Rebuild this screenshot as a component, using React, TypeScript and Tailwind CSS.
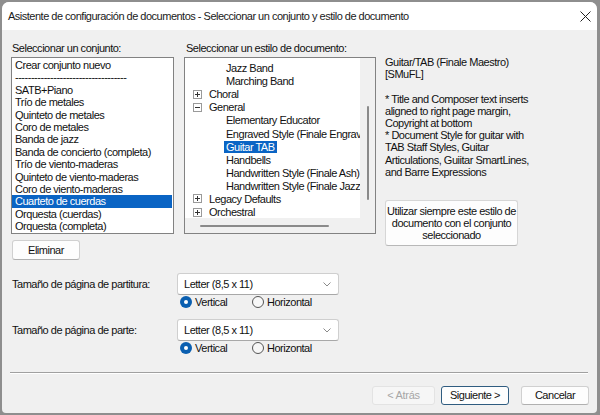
import React from "react";

const conjuntos = [
  "Crear conjunto nuevo",
  "-".repeat(35),
  "SATB+Piano",
  "Trío de metales",
  "Quinteto de metales",
  "Coro de metales",
  "Banda de jazz",
  "Banda de concierto (completa)",
  "Trío de viento-maderas",
  "Quinteto de viento-maderas",
  "Coro de viento-maderas",
  "Cuarteto de cuerdas",
  "Orquesta (cuerdas)",
  "Orquesta (completa)",
];

type Estilo = { label: string; child?: boolean; toggle?: "plus" | "minus"; selected?: boolean };

const estilos: Estilo[] = [
  { label: "Jazz Band", child: true },
  { label: "Marching Band", child: true },
  { label: "Choral", toggle: "plus" },
  { label: "General", toggle: "minus" },
  { label: "Elementary Educator", child: true },
  { label: "Engraved Style (Finale Engraved)", child: true },
  { label: "Guitar TAB", child: true, selected: true },
  { label: "Handbells", child: true },
  { label: "Handwritten Style (Finale Ash)", child: true },
  { label: "Handwritten Style (Finale Jazz)", child: true },
  { label: "Legacy Defaults", toggle: "plus" },
  { label: "Orchestral", toggle: "plus" },
];

function Toggle({ kind }: { kind: "plus" | "minus" }) {
  return (
    <svg width="9" height="9" viewBox="0 0 9 9" className="shrink-0">
      <rect x="0.5" y="0.5" width="8" height="8" fill="#fff" stroke="#9a9a9a" />
      <line x1="2" y1="4.5" x2="7" y2="4.5" stroke="#333" />
      {kind === "plus" && <line x1="4.5" y1="2" x2="4.5" y2="7" stroke="#333" />}
    </svg>
  );
}

function Radio({ checked, label }: { checked?: boolean; label: string }) {
  return (
    <div className="flex items-center">
      {checked ? (
        <span className="w-[12px] h-[12px] rounded-full bg-[#0a5fb0] flex items-center justify-center">
          <span className="w-[4px] h-[4px] rounded-full bg-white" />
        </span>
      ) : (
        <span className="w-[12px] h-[12px] rounded-full border border-[#555] bg-[#f7f7f7]" />
      )}
      <span className="ml-[3px]">{label}</span>
    </div>
  );
}

function Select({ value }: { value: string }) {
  return (
    <div className="w-[162px] h-[22px] bg-white border border-[#cfcfcf] border-b-[#a8a8a8] rounded-[3px] flex items-center justify-between pl-[6px] pr-[7px]">
      <span>{value}</span>
      <svg width="8" height="5" viewBox="0 0 8 5">
        <path d="M0.5 0.5 L4 4 L7.5 0.5" fill="none" stroke="#8a8a8a" strokeWidth="1" />
      </svg>
    </div>
  );
}

function PageSize({ label }: { label: string }) {
  return (
    <div className="flex">
      <div className="w-[165px] h-[22px] flex items-center">{label}</div>
      <div className="flex flex-col">
        <Select value="Letter (8,5 x 11)" />
        <div className="flex items-center h-[12px] mt-[1px] pl-[3px]">
          <div className="w-[72px]">
            <Radio checked label="Vertical" />
          </div>
          <Radio label="Horizontal" />
        </div>
      </div>
    </div>
  );
}

export default function App() {
  return (
    <div className="w-[600px] h-[415px] bg-[#8e8e8e] pt-[2px] pl-[2px] pr-[3px] pb-[2px] font-['Liberation_Sans',Arial,sans-serif] text-[11px] tracking-[-0.48px] text-[#111] overflow-hidden">
      <div className="h-full flex flex-col rounded-t-[7px] rounded-b-[4px] overflow-hidden bg-[#f0f0f0]">
        {/* title bar */}
        <div className="h-[28px] bg-white flex items-center justify-between pl-[6px] pr-[6px] shrink-0">
          <span className="text-[11px] tracking-[-0.5px] text-[#1a1a1a]">
            Asistente de configuración de documentos - Seleccionar un conjunto y estilo de documento
          </span>
          <svg width="11" height="11" viewBox="0 0 11 11">
            <path d="M0.5 0.5 L10.5 10.5 M10.5 0.5 L0.5 10.5" stroke="#222" strokeWidth="1" />
          </svg>
        </div>

        <div className="flex flex-col pl-[9px] pt-[12px]">
          <div className="flex">
            {/* conjuntos */}
            <div className="w-[163px] flex flex-col">
              <div className="h-[12px] leading-[12px] ml-[1px]">Seleccionar un conjunto:</div>
              <div className="mt-[3px] h-[177px] bg-white border border-[#828282] pt-[1px] flex flex-col">
                {conjuntos.map((c, i) => (
                  <div
                    key={i}
                    className={`h-[12.4px] leading-[12.4px] pl-[3px] whitespace-nowrap overflow-hidden ${
                      c === "Cuarteto de cuerdas" ? "bg-[#0a64c4] text-white mr-[1px]" : ""
                    }`}
                  >
                    {c}
                  </div>
                ))}
              </div>
              <button className="mt-[6px] ml-[1px] w-[68px] h-[20px] bg-[#fdfdfd] border border-[#d0d0d0] border-b-[#b0b0b0] rounded-[3px] text-center">
                Eliminar
              </button>
            </div>

            {/* estilos */}
            <div className="w-[192px] ml-[10px] flex flex-col">
              <div className="h-[12px] leading-[12px] ml-[2px]">Seleccionar un estilo de documento:</div>
              <div className="mt-[3px] h-[177px] border border-[#828282] bg-[#f0f0f0] grid grid-cols-[175px_15px] grid-rows-[160px_15px]">
                <div className="bg-white overflow-hidden pt-[3.5px]">
                  {estilos.map((e) => (
                    <div
                      key={e.label}
                      className={`h-[13.1px] flex items-center whitespace-nowrap ${e.child ? "pl-[39px]" : "pl-[8px]"}`}
                    >
                      {e.toggle && <Toggle kind={e.toggle} />}
                      <span
                        className={`px-[2px] h-[12px] leading-[12px] ${e.toggle ? "ml-[5px]" : ""} ${
                          e.selected ? "bg-[#0a64c4] text-white" : ""
                        }`}
                      >
                        {e.label}
                      </span>
                    </div>
                  ))}
                </div>
                <div className="flex justify-center pt-[48px]">
                  <div className="w-[2px] h-[94px] bg-[#8a8a8a] rounded-full" />
                </div>
                <div className="flex items-center pl-[15px]">
                  <div className="w-[129px] h-[2px] bg-[#8a8a8a] rounded-full" />
                </div>
                <div />
              </div>
            </div>

            {/* descripción */}
            <div className="ml-[9px] flex flex-col pt-[14px]">
              <div className="leading-[12.2px] whitespace-nowrap">
                Guitar/TAB (Finale Maestro)
                <br />
                [SMuFL]
                <br />
                <br />
                * Title and Composer text inserts
                <br />
                aligned to right page margin,
                <br />
                Copyright at bottom
                <br />
                * Document Style for guitar with
                <br />
                TAB Staff Styles, Guitar
                <br />
                Articulations, Guiitar SmartLines,
                <br />
                and Barre Expressions
              </div>
              <button className="mt-[22px] w-[133px] h-[46px] bg-[#fdfdfd] border border-[#d6d6d6] border-b-[#b8b8b8] rounded-[3px] leading-[12.2px] text-center whitespace-nowrap">
                Utilizar siempre este estilo de
                <br />
                documento con el conjunto
                <br />
                seleccionado
              </button>
            </div>
          </div>

          <div className="mt-[13px] ml-[1px]">
            <PageSize label="Tamaño de página de partitura:" />
          </div>
          <div className="mt-[11px] ml-[1px]">
            <PageSize label="Tamaño de página de parte:" />
          </div>

          <div className="mt-[18px] mr-[9px] ml-[-1px] h-[2px] border-t border-[#a0a0a0] border-b border-b-white" />

          <div className="mt-[12px] mr-[8px] flex justify-end">
            <button className="w-[63px] h-[19px] bg-[#f6f6f6] border border-[#e3e3e3] rounded-[3px] text-[#a6a6a6] tracking-[-0.3px]">
              &lt; Atrás
            </button>
            <button className="ml-[6px] w-[68px] h-[19px] bg-[#fdfdfd] border border-[#2f5c80] rounded-[3px]">
              Siguiente &gt;
            </button>
            <button className="ml-[12px] w-[68px] h-[19px] bg-[#fdfdfd] border border-[#d0d0d0] border-b-[#b0b0b0] rounded-[3px]">
              Cancelar
            </button>
          </div>
        </div>
      </div>
    </div>
  );
}
